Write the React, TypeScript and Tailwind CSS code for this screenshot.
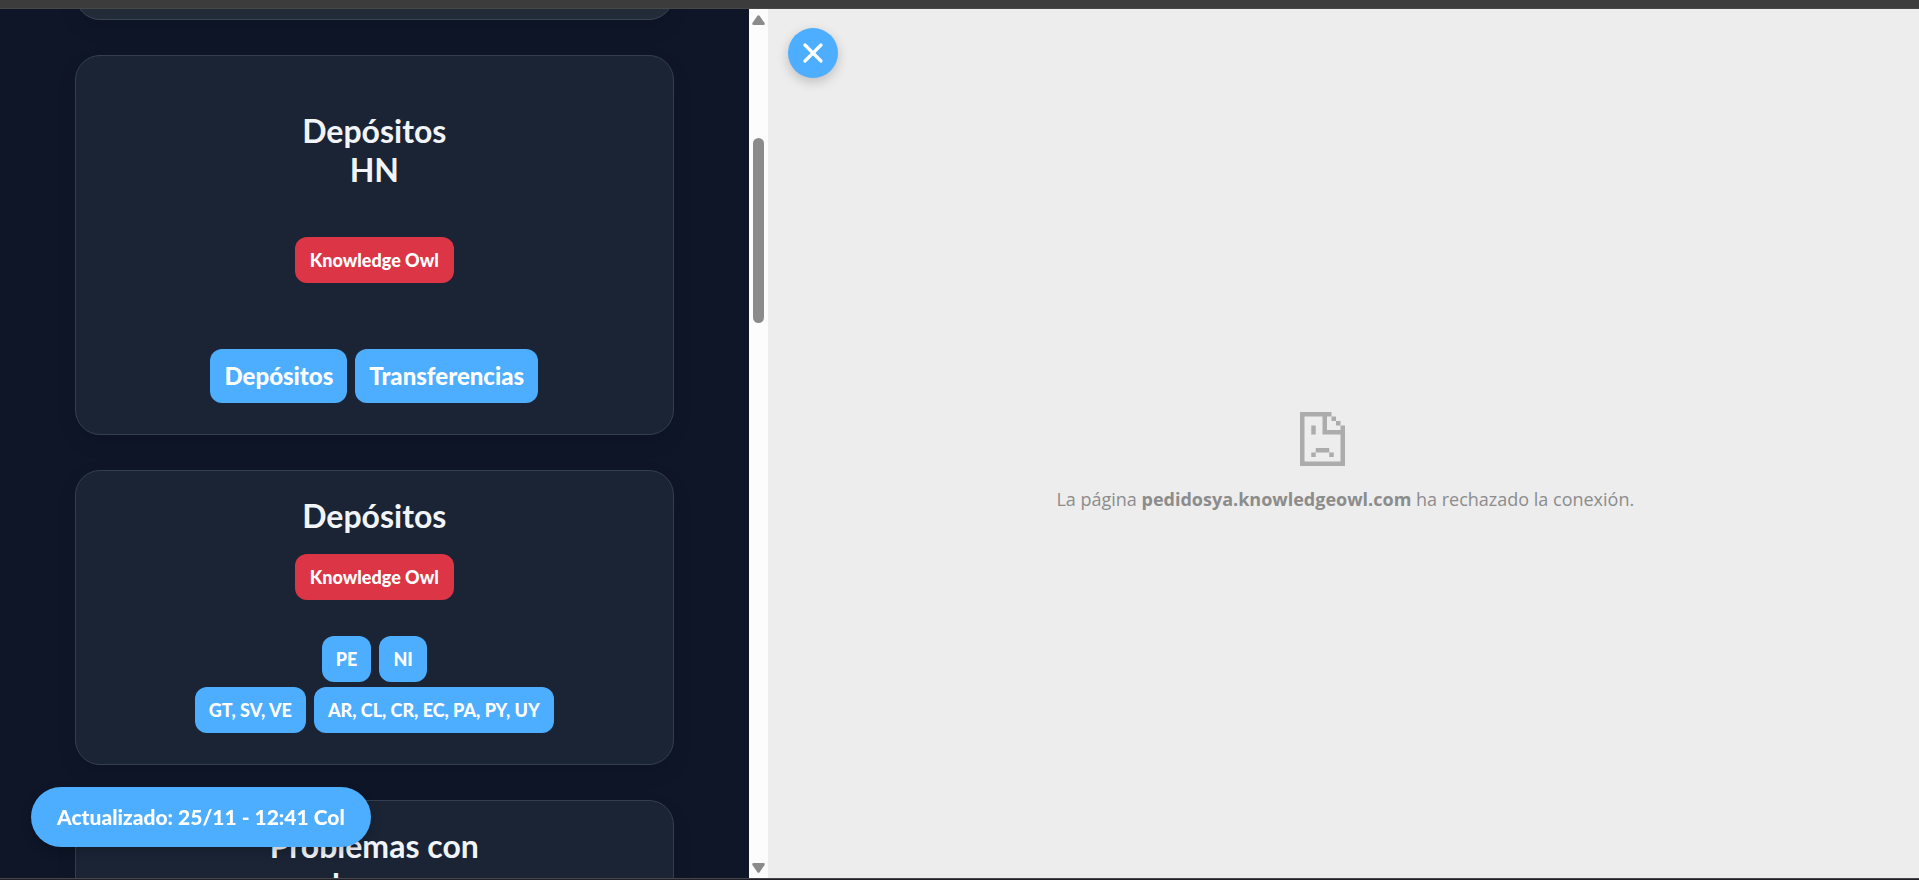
import type { ReactNode } from 'react'
import { X } from 'lucide-react'

type LinkItem = { label: string; href: string }

const depositosLinks: LinkItem[] = [
  { label: 'Depósitos', href: '#depositos' },
  { label: 'Transferencias', href: '#transferencias' },
]

const paisesRows: LinkItem[][] = [
  [
    { label: 'PE', href: '#pe' },
    { label: 'NI', href: '#ni' },
  ],
  [
    { label: 'GT, SV, VE', href: '#gt-sv-ve' },
    { label: 'AR, CL, CR, EC, PA, PY, UY', href: '#ar-cl-cr-ec-pa-py-uy' },
  ],
]

export default function App() {
  return (
    <div className="flex h-screen flex-col overflow-hidden bg-[#ededed] font-['Century_Gothic','Lato',sans-serif]">
      <div className="h-[9px] shrink-0 border-b border-[#474747] bg-[#3c3c3c]" />

      <div className="flex min-h-0 flex-1">
        <div className="flex w-2/5 shrink-0">
          <main className="flex min-w-0 flex-1 flex-col items-center gap-[35px] overflow-hidden bg-[#0e1628]">
            <div className="-mt-[49px] h-[60px] w-4/5 shrink-0 rounded-[25px] border border-[#3a4553] bg-[#222c39] shadow-[0_8px_20px_rgba(0,0,0,0.1)]" />

            <Card className="pt-[55px]">
              <h2 className="text-[32px] leading-[39px] font-bold">
                Depósitos
                <br />
                HN
              </h2>
              <div className="mt-12">
                <OwlButton />
              </div>
              <div className="mt-[66px] flex gap-2">
                {depositosLinks.map((link) => (
                  <a
                    key={link.label}
                    href={link.href}
                    className="flex h-[54px] items-center rounded-xl bg-[#4dadff] px-[14px] text-[24px] font-black text-white"
                  >
                    {link.label}
                  </a>
                ))}
              </div>
            </Card>

            <Card className="pt-[25px]">
              <h2 className="text-[32px] leading-[39px] font-bold">Depósitos</h2>
              <div className="mt-[19px]">
                <OwlButton />
              </div>
              <div className="mt-9 flex flex-col items-center gap-[5px]">
                {paisesRows.map((row) => (
                  <div key={row[0].label} className="flex gap-2">
                    {row.map((link) => (
                      <a
                        key={link.label}
                        href={link.href}
                        className="flex h-[46px] items-center rounded-xl bg-[#4dadff] px-[14px] text-[18px] font-black text-white"
                      >
                        {link.label}
                      </a>
                    ))}
                  </div>
                ))}
              </div>
            </Card>

            <Card className="pt-[25px]">
              <h2 className="text-[32px] leading-[39px] font-bold">
                Problemas con
                <br />
                la app
              </h2>
            </Card>
          </main>

          <ScrollTrack />
        </div>

        <section className="relative flex min-w-0 flex-1 flex-col items-center bg-[#ededed] pt-[403px] pl-1">
          <button
            type="button"
            aria-label="Cerrar"
            className="absolute top-[19px] left-5 flex size-[50px] items-center justify-center rounded-full bg-[#4dadff] text-white shadow-[0_4px_12px_rgba(0,0,0,0.2)]"
          >
            <X className="size-8" strokeWidth={2.4} />
          </button>

          <SadPage />
          <p className="mt-[21px] font-['Segoe_UI','Open_Sans',sans-serif] text-[18px] leading-6 text-[#8c8c8c]">
            La página <strong className="font-bold">pedidosya.knowledgeowl.com</strong> ha rechazado la
            conexión.
          </p>
        </section>
      </div>

      <div className="h-[2px] shrink-0 border-t border-[#474747] bg-[#20202c]" />

      <div className="fixed bottom-[33px] left-[31px] flex h-[60px] items-center rounded-full bg-[#4dadff] px-[26px] text-[21px] font-black text-white shadow-[0_4px_12px_rgba(0,0,0,0.2)]">
        Actualizado: 25/11 - 12:41 Col
      </div>
    </div>
  )
}

function Card({ className, children }: { className: string; children: ReactNode }) {
  return (
    <article
      className={`flex w-4/5 shrink-0 flex-col items-center rounded-[25px] border border-[#343f4e] bg-[#1a2435] pb-[31px] text-center text-[#f1f5f9] shadow-[0_8px_20px_rgba(0,0,0,0.1)] ${className}`}
    >
      {children}
    </article>
  )
}

function OwlButton() {
  return (
    <button
      type="button"
      className="flex h-[46px] items-center rounded-xl bg-[#dc3545] px-[15px] text-[18px] font-black text-white"
    >
      Knowledge Owl
    </button>
  )
}

function ScrollTrack() {
  return (
    <div className="flex w-[19px] shrink-0 flex-col items-center bg-[#fcfcfc] pt-[6px] pb-[5px]">
      <svg className="h-[10px] w-[13px]" viewBox="0 0 13 10" fill="#8b8b8b">
        <path d="M5.4.8Q6.5-.5 7.6.8L12.6 8Q13.2 10 11.5 10H1.5Q-.2 10 .4 8Z" />
      </svg>
      <div className="mt-[113px] h-[185px] w-[11px] rounded-full bg-[#8b8b8b]" />
      <svg className="mt-auto h-[10px] w-[13px]" viewBox="0 0 13 10" fill="#8b8b8b">
        <path d="M5.4 9.2Q6.5 10.5 7.6 9.2L12.6 2Q13.2 0 11.5 0H1.5Q-.2 0 .4 2Z" />
      </svg>
    </div>
  )
}

function SadPage() {
  return (
    <svg className="h-[54px] w-[90px]" viewBox="0 0 20 12" fill="#acacac" aria-hidden="true">
      <path d="M0 0H7V1H1V11H9V5H5V1H6V4H9V3H10V12H0Z" />
      <path d="M7 1H8V2H7ZM8 2H9V3H8Z" />
      <path d="M2.5 3H3.5V5H2.5Z" />
      <path d="M3.5 8H6.5V9H3.5ZM2.5 9H3.5V10H2.5ZM6.5 9H7.5V10H6.5Z" />
    </svg>
  )
}
